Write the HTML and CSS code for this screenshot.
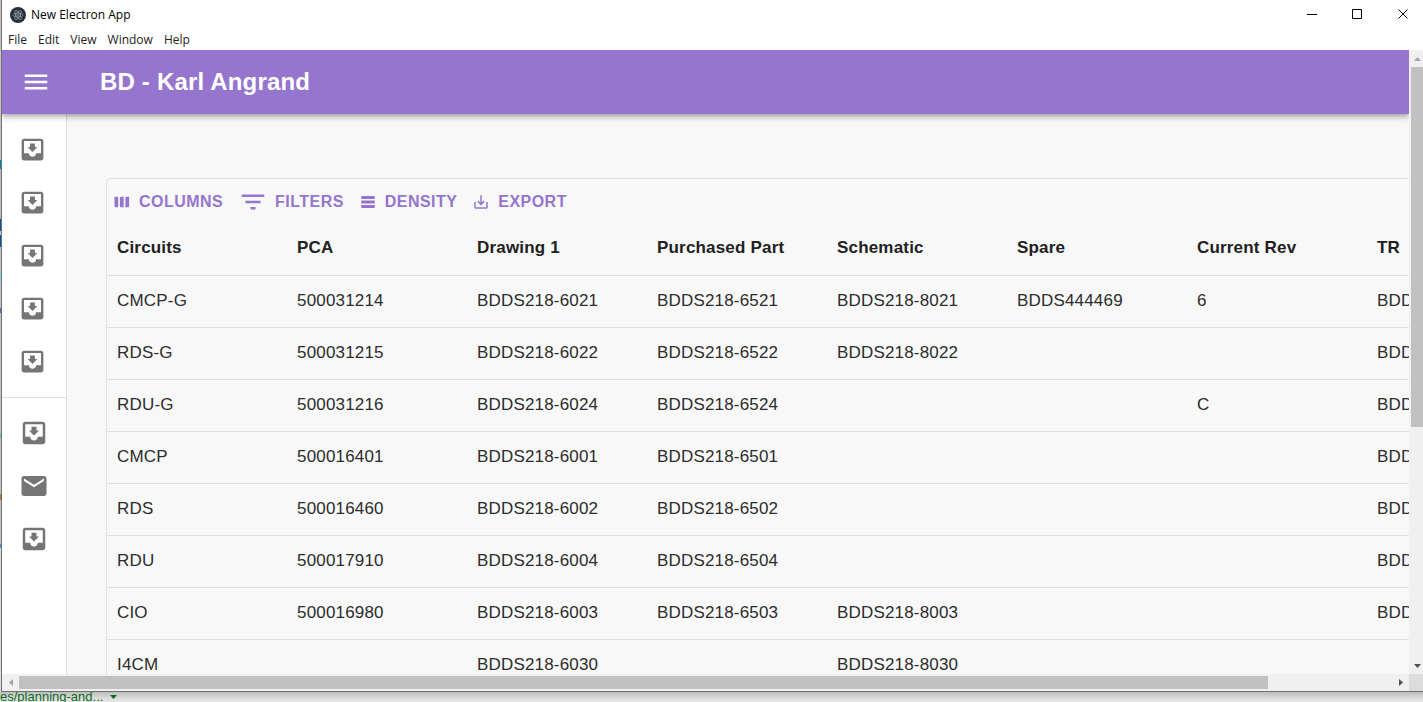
FILE: index.html
```html
<!DOCTYPE html>
<html lang="en">
<head>
<meta charset="utf-8">
<title>New Electron App</title>
<link rel="stylesheet" href="styles.css">
</head>
<body>
<svg class="defs" aria-hidden="true">
  <symbol id="inbox" viewBox="0 0 24 24"><path d="M19 3H4.99c-1.11 0-1.98.9-1.98 2L3 19c0 1.1.88 2 1.99 2H19c1.1 0 2-.9 2-2V5c0-1.1-.9-2-2-2zm0 12h-4c0 1.66-1.35 3-3 3s-3-1.34-3-3H4.99V5H19v10zm-3-5h-2V7h-4v3H8l4 4 4-4z"/></symbol>
  <symbol id="mail" viewBox="0 0 24 24"><path d="M20 4H4c-1.1 0-1.99.9-1.99 2L2 18c0 1.1.9 2 2 2h16c1.1 0 2-.9 2-2V6c0-1.1-.9-2-2-2zm0 4l-8 5-8-5V6l8 5 8-5v2z"/></symbol>
</svg>
<div class="window">
  <header class="titlebar">
    <svg class="app-logo" viewBox="0 0 16 16"><circle cx="8" cy="8" r="8" fill="#2b2e3a"/><g fill="none" stroke="#b4dbe4" stroke-width=".7" opacity=".7"><ellipse cx="8" cy="8" rx="5.2" ry="2"/><ellipse cx="8" cy="8" rx="5.2" ry="2" transform="rotate(60 8 8)"/><ellipse cx="8" cy="8" rx="5.2" ry="2" transform="rotate(120 8 8)"/></g><circle cx="8" cy="8" r=".7" fill="#b4dbe4"/></svg>
    <span class="app-title">New Electron App</span>
    <div class="window-controls">
      <button aria-label="Minimize"><svg viewBox="0 0 11 11"><path d="M0 5.5h10"/></svg></button>
      <button aria-label="Maximize"><svg viewBox="0 0 11 11"><path d="M.5.5h9v9h-9z"/></svg></button>
      <button aria-label="Close"><svg viewBox="0 0 11 11"><path d="M.5.5l9 9m0-9l-9 9"/></svg></button>
    </div>
  </header>
  <nav class="menubar">
    <button>File</button><button>Edit</button><button>View</button><button>Window</button><button>Help</button>
  </nav>
  <div class="viewport">
    <div class="page">
      <header class="appbar">
        <button class="menu-button" aria-label="Open menu"><svg viewBox="0 0 24 24"><path d="M3 18h18v-2H3v2zm0-5h18v-2H3v2zm0-7v2h18V6H3z"/></svg></button>
        <h1>BD - Karl Angrand</h1>
      </header>
      <div class="content">
        <aside class="drawer">
          <div class="list">
            <button aria-label="Inbox 1"><svg><use href="#inbox"/></svg></button>
            <button aria-label="Inbox 2"><svg><use href="#inbox"/></svg></button>
            <button aria-label="Inbox 3"><svg><use href="#inbox"/></svg></button>
            <button aria-label="Inbox 4"><svg><use href="#inbox"/></svg></button>
            <button aria-label="Inbox 5"><svg><use href="#inbox"/></svg></button>
          </div>
          <div class="list list-secondary">
            <button aria-label="Inbox 6"><svg><use href="#inbox"/></svg></button>
            <button aria-label="Mail"><svg><use href="#mail"/></svg></button>
            <button aria-label="Inbox 7"><svg><use href="#inbox"/></svg></button>
          </div>
        </aside>
        <main class="main">
          <section class="data-grid">
            <div class="toolbar">
              <button><svg viewBox="0 0 24 24"><path d="M6 5H3c-.55 0-1 .45-1 1v12c0 .55.45 1 1 1h3c.55 0 1-.45 1-1V6c0-.55-.45-1-1-1zm14.500 0h-3c-.55 0-1 .45-1 1v12c0 .55.45 1 1 1h3c.55 0 1-.45 1-1V6c0-.55-.45-1-1-1zm-7.250 0h-3c-.55 0-1 .45-1 1v12c0 .55.45 1 1 1h3c.55 0 1-.45 1-1V6c0-.55-.45-1-1-1z"/></svg>COLUMNS</button>
              <button class="filters"><svg viewBox="0 0 24 24"><path d="M10 18h4v-2h-4v2zM3 6v2h18V6H3zm3 7h12v-2H6v2z"/></svg>FILTERS</button>
              <button><svg viewBox="0 0 24 24"><path d="M21 8H3V4h18v4zm0 2H3v4h18v-4zm0 6H3v4h18v-4z"/></svg>DENSITY</button>
              <button><svg viewBox="0 0 24 24"><path d="M19 12v7H5v-7H3v7c0 1.1.9 2 2 2h14c1.1 0 2-.9 2-2v-7h-2zm-6 .67l2.590-2.580L17 11.500l-5 5-5-5 1.410-1.410L11 12.670V3h2z"/></svg>EXPORT</button>
            </div>
            <table>
              <thead>
                <tr><th>Circuits</th><th>PCA</th><th>Drawing 1</th><th>Purchased Part</th><th>Schematic</th><th>Spare</th><th>Current Rev</th><th>TR</th></tr>
              </thead>
              <tbody>
                <tr><td>CMCP-G</td><td>500031214</td><td>BDDS218-6021</td><td>BDDS218-6521</td><td>BDDS218-8021</td><td>BDDS444469</td><td>6</td><td>BDDS</td></tr>
                <tr><td>RDS-G</td><td>500031215</td><td>BDDS218-6022</td><td>BDDS218-6522</td><td>BDDS218-8022</td><td></td><td></td><td>BDDS</td></tr>
                <tr><td>RDU-G</td><td>500031216</td><td>BDDS218-6024</td><td>BDDS218-6524</td><td></td><td></td><td>C</td><td>BDDS</td></tr>
                <tr><td>CMCP</td><td>500016401</td><td>BDDS218-6001</td><td>BDDS218-6501</td><td></td><td></td><td></td><td>BDDS</td></tr>
                <tr><td>RDS</td><td>500016460</td><td>BDDS218-6002</td><td>BDDS218-6502</td><td></td><td></td><td></td><td>BDDS</td></tr>
                <tr><td>RDU</td><td>500017910</td><td>BDDS218-6004</td><td>BDDS218-6504</td><td></td><td></td><td></td><td>BDDS</td></tr>
                <tr><td>CIO</td><td>500016980</td><td>BDDS218-6003</td><td>BDDS218-6503</td><td>BDDS218-8003</td><td></td><td></td><td>BDDS</td></tr>
                <tr><td>I4CM</td><td></td><td>BDDS218-6030</td><td></td><td>BDDS218-8030</td><td></td><td></td><td></td></tr>
              </tbody>
            </table>
          </section>
        </main>
      </div>
    </div>
    <div class="scrollbar vertical">
      <svg class="arrow dim" viewBox="0 0 7 4"><path d="M0 4L3.500 0L7 4z"/></svg>
      <div class="track"><div class="thumb"></div></div>
      <svg class="arrow" viewBox="0 0 7 4"><path d="M0 0L3.500 4L7 0z"/></svg>
    </div>
    <div class="scrollbar horizontal">
      <svg class="arrow dim" viewBox="0 0 4 7"><path d="M4 0L0 3.500L4 7z"/></svg>
      <div class="track"><div class="thumb"></div></div>
      <svg class="arrow" viewBox="0 0 4 7"><path d="M0 0L4 3.500L0 7z"/></svg>
    </div>
    <div class="corner"></div>
  </div>
</div>
<footer class="behind"><span>es/planning-and...</span><svg viewBox="0 0 7 4"><path d="M0 0h7L3.500 4z"/></svg></footer>
</body>
</html>
```
FILE: styles.css
```css
* { box-sizing: border-box; }

body {
  margin: 0;
  height: 100vh;
  overflow: hidden;
  display: flex;
  flex-direction: column;
  background: linear-gradient(#c4c4c4 0 160px, #008ba3 160px 169px, #b8bcc0 169px 219px, #0055a5 219px 231px, #c4c4c4 231px 235px, #0055a5 235px 247px, #c4c4c4 247px 273px, #8fd0ea 273px 282px, #c4c4c4 282px 308px, #4c78b8 308px 313px, #c4c4c4 313px 433px, #78b8d8 433px 438px, #c4c4c4 438px 494px, #b87830 494px 500px, #c4c4c4 500px 544px, #5090d0 544px 548px, #dcdcdc 548px);
  font-family: "Liberation Sans", Arial, sans-serif;
  color: #212121;
}

button {
  margin: 0;
  padding: 0;
  border: 0;
  background: none;
  font: inherit;
  color: inherit;
}

svg { display: block; fill: currentColor; flex: none; }
.defs { position: absolute; width: 0; height: 0; }

.window {
  flex: 1;
  min-height: 0;
  display: flex;
  flex-direction: column;
  margin-left: 1px;
  background: #fff;
  border-left: 1px solid #707070;
  border-bottom: 1px solid #707070;
}

.titlebar {
  height: 29px;
  flex: none;
  display: flex;
  align-items: center;
  padding-left: 8px;
  font: 12px "Open Sans", "Noto Sans", sans-serif;
  color: #000;
}
.app-logo { width: 16px; height: 16px; margin-right: 5px; }
.window-controls { display: flex; margin-left: auto; }
.window-controls button {
  width: 45px;
  height: 29px;
  display: flex;
  align-items: center;
  justify-content: center;
}
.window-controls button:last-child { width: 43px; padding-left: 4px; }
.window-controls svg { width: 11px; height: 11px; fill: none; stroke: #000; }

.menubar {
  height: 21px;
  flex: none;
  display: flex;
  align-items: center;
  gap: 11px;
  padding-left: 6px;
  font: 12px "Open Sans", "Noto Sans", sans-serif;
  color: #222;
}

.viewport {
  flex: 1;
  min-height: 0;
  display: grid;
  grid-template-columns: minmax(0, 1fr) 14px;
  grid-template-rows: minmax(0, 1fr) 17px;
}

.page {
  overflow: hidden;
  display: flex;
  flex-direction: column;
  background: #f8f8f8;
}

.appbar {
  position: relative;
  height: 64px;
  flex: none;
  display: flex;
  align-items: center;
  gap: 49px;
  padding-left: 19px;
  background: #9575cd;
  color: #fff;
  box-shadow: 0 2px 4px -1px rgba(0, 0, 0, .2), 0 4px 5px 0 rgba(0, 0, 0, .14), 0 1px 10px 0 rgba(0, 0, 0, .12);
}
.menu-button svg { width: 30px; height: 30px; }
.appbar h1 { margin: 0; font-size: 24px; line-height: 32px; letter-spacing: .0075em; }

.content { flex: 1; min-height: 0; display: flex; }

.drawer {
  width: 65px;
  flex: none;
  background: #fff;
  border-right: 1px solid #e0e0e0;
  color: #757575;
}
.list { padding: 9px 0; }
.list button { display: flex; align-items: center; width: 100%; height: 53px; padding-left: 16px; }
.list svg { width: 29px; height: 29px; }
.list-secondary { padding: 8px 0; border-top: 1px solid #e0e0e0; }
.list-secondary button { padding-left: 17px; }
.list-secondary svg { width: 30px; height: 30px; }

.main { flex: 1; min-width: 0; padding: 64px 0 0 39px; }

.data-grid {
  width: max-content;
  min-width: 100%;
  border: 1px solid #e0e0e0;
  border-radius: 4px;
}

.toolbar { display: flex; gap: 5px; padding: 4px 1px 0; }
.toolbar button {
  display: flex;
  align-items: center;
  gap: 8px;
  height: 37px;
  padding: 0 5px;
  font-size: 16px;
  font-weight: 700;
  letter-spacing: .02857em;
  color: #9575cd;
}
.toolbar svg { width: 18px; height: 18px; }
.toolbar .filters { gap: 7px; }
.toolbar .filters svg { width: 30px; height: 30px; }

table {
  width: 1440px;
  table-layout: fixed;
  border-collapse: separate;
  border-spacing: 0;
  font-size: 17px;
  line-height: 24px;
  letter-spacing: .01071em;
}
th, td {
  height: 52px;
  padding: 0 10px 2px;
  border-bottom: 1px solid #e0e0e0;
  text-align: left;
}
td { color: #2c2c2c; }
th { height: 56px; padding-bottom: 0; }

.scrollbar { display: flex; align-items: center; background: #f0f0f0; color: #505050; }
.dim { color: #a3a3a3; }
.track { flex: 1; align-self: stretch; }
.thumb { background: #c1c1c1; }
.vertical { flex-direction: column; }
.vertical .arrow { width: 7px; height: 4px; margin: 7px 0 6px 3px; }
.vertical .track { padding-left: 2px; }
.vertical .thumb { height: 61%; }
.horizontal .arrow { width: 4px; height: 7px; margin: 0 6px 0 7px; }
.horizontal .track { padding: 2px 0; }
.horizontal .thumb { width: 91%; height: 100%; }
.corner { background: #dcdcdc; }

.behind {
  height: 10px;
  flex: none;
  overflow: hidden;
  display: flex;
  align-items: center;
  gap: 7px;
  background: linear-gradient(#bdbdbd, #e4e4e4 8px);
  font-size: 13px;
  line-height: 14px;
  color: #0b6b1d;
}
.behind svg { width: 7px; height: 4px; }
```
